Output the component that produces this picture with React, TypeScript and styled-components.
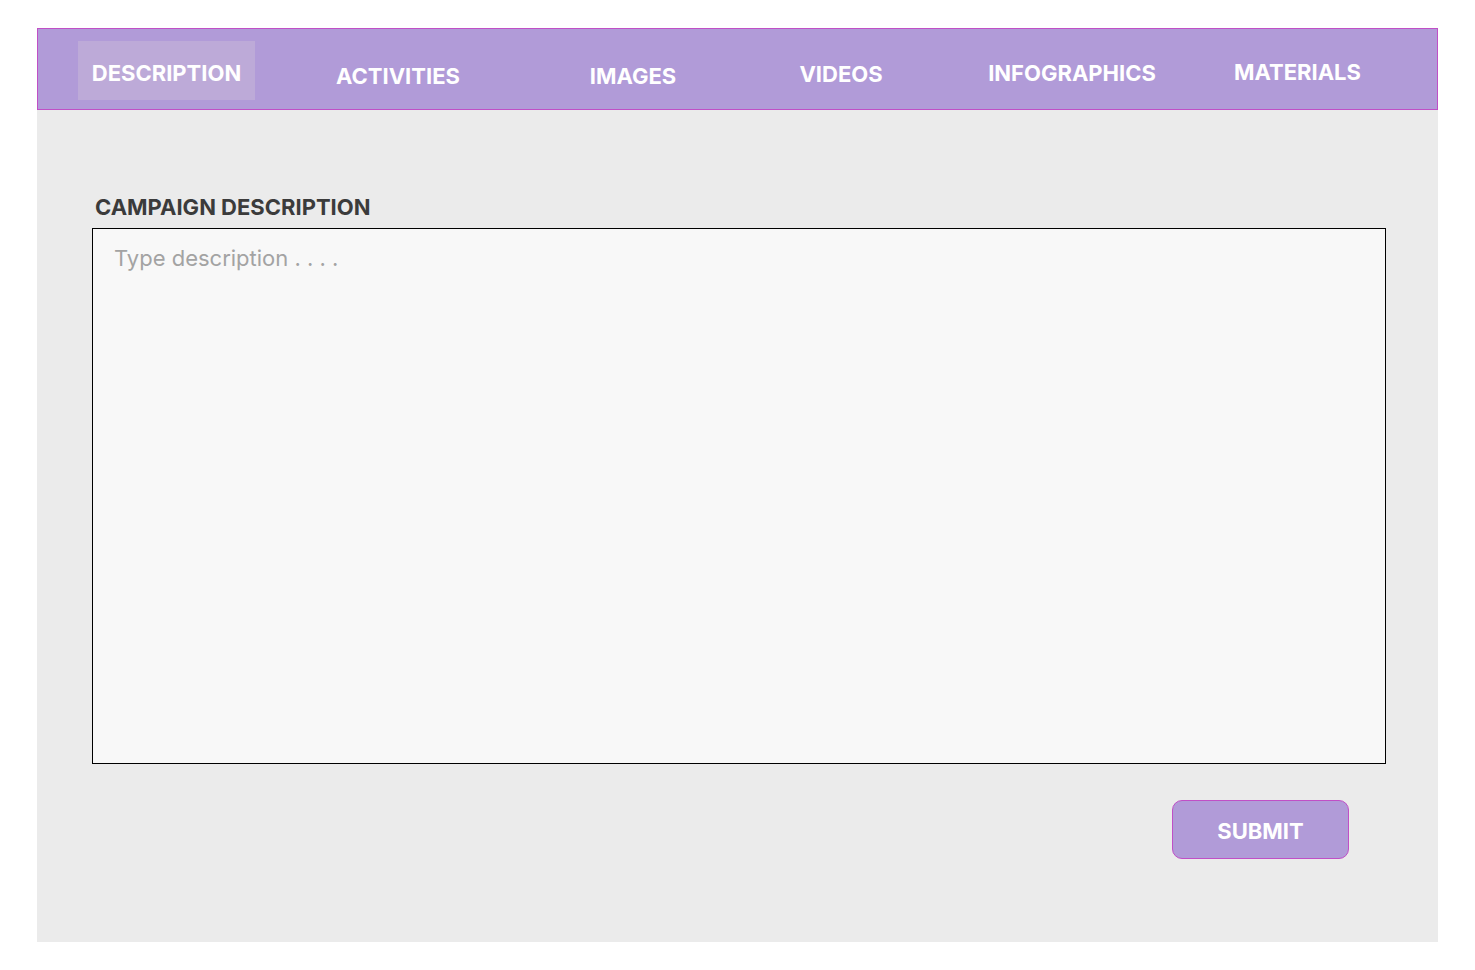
import React from "react";
import styled, { createGlobalStyle } from "styled-components";

const Global = createGlobalStyle`
  html, body { margin: 0; padding: 0; background: #ffffff; }
  body { font-family: Inter, "Noto Sans", Arial, sans-serif; }
  * { box-sizing: border-box; }
`;

const Page = styled.div`
  padding: 28px 37px;
`;

const Panel = styled.div`
  width: 1401px;
  height: 914px;
  background: #ebebeb;
  display: flex;
  flex-direction: column;
`;

const NavBar = styled.nav`
  height: 82px;
  background: #b19bd8;
  border: 1px solid #c04fc6;
  display: flex;
  align-items: flex-start;
  padding: 12px 0 0 40px;
`;

const Tab = styled.div<{ $w: number; $active?: boolean; $dy: number }>`
  width: ${(p) => p.$w}px;
  height: 59px;
  display: flex;
  justify-content: center;
  align-items: center;
  padding-top: ${(p) => p.$dy}px;
  background: ${(p) => (p.$active ? "#bdaad8" : "transparent")};
  color: #ffffff;
  font-weight: 700;
  font-size: 22px;
  white-space: nowrap;
`;

const Content = styled.div`
  padding: 84px 51px 0 55px;
  display: flex;
  flex-direction: column;
`;

const Label = styled.label`
  font-size: 22px;
  font-weight: 700;
  color: #3b3b3b;
  margin-left: 3px;
  line-height: 26px;
  margin-bottom: 8px;
`;

const TextArea = styled.textarea`
  width: 1294px;
  height: 536px;
  border: 1px solid #000000;
  background: #f8f8f8;
  padding: 15px 21px;
  font-family: Inter, "Noto Sans", Arial, sans-serif;
  font-size: 22px;
  line-height: 28px;
  color: #333;
  resize: none;
  outline: none;
  &::placeholder { color: #a3a3a3; }
`;

const Actions = styled.div`
  display: flex;
  justify-content: flex-end;
  padding-right: 38px;
  margin-top: 36px;
`;

const SubmitButton = styled.button`
  width: 177px;
  height: 59px;
  border-radius: 10px;
  border: 1px solid #c04fc6;
  background: #b19bd8;
  color: #ffffff;
  font-family: Inter, "Noto Sans", Arial, sans-serif;
  font-weight: 700;
  font-size: 22px;
  padding: 2px 0 0;
  cursor: pointer;
`;

const tabs = [
  { label: "DESCRIPTION", w: 177, dy: 4, active: true },
  { label: "ACTIVITIES", w: 286, dy: 10 },
  { label: "IMAGES", w: 184, dy: 10 },
  { label: "VIDEOS", w: 232, dy: 7 },
  { label: "INFOGRAPHICS", w: 230, dy: 5 },
  { label: "MATERIALS", w: 221, dy: 3 },
];

export default function App() {
  return (
    <Page>
      <Global />
      <Panel>
        <NavBar>
          {tabs.map((t) => (
            <Tab key={t.label} $w={t.w} $dy={t.dy} $active={t.active}>
              {t.label}
            </Tab>
          ))}
        </NavBar>
        <Content>
          <Label>CAMPAIGN DESCRIPTION</Label>
          <TextArea placeholder="Type description . . . ." />
          <Actions>
            <SubmitButton>SUBMIT</SubmitButton>
          </Actions>
        </Content>
      </Panel>
    </Page>
  );
}
